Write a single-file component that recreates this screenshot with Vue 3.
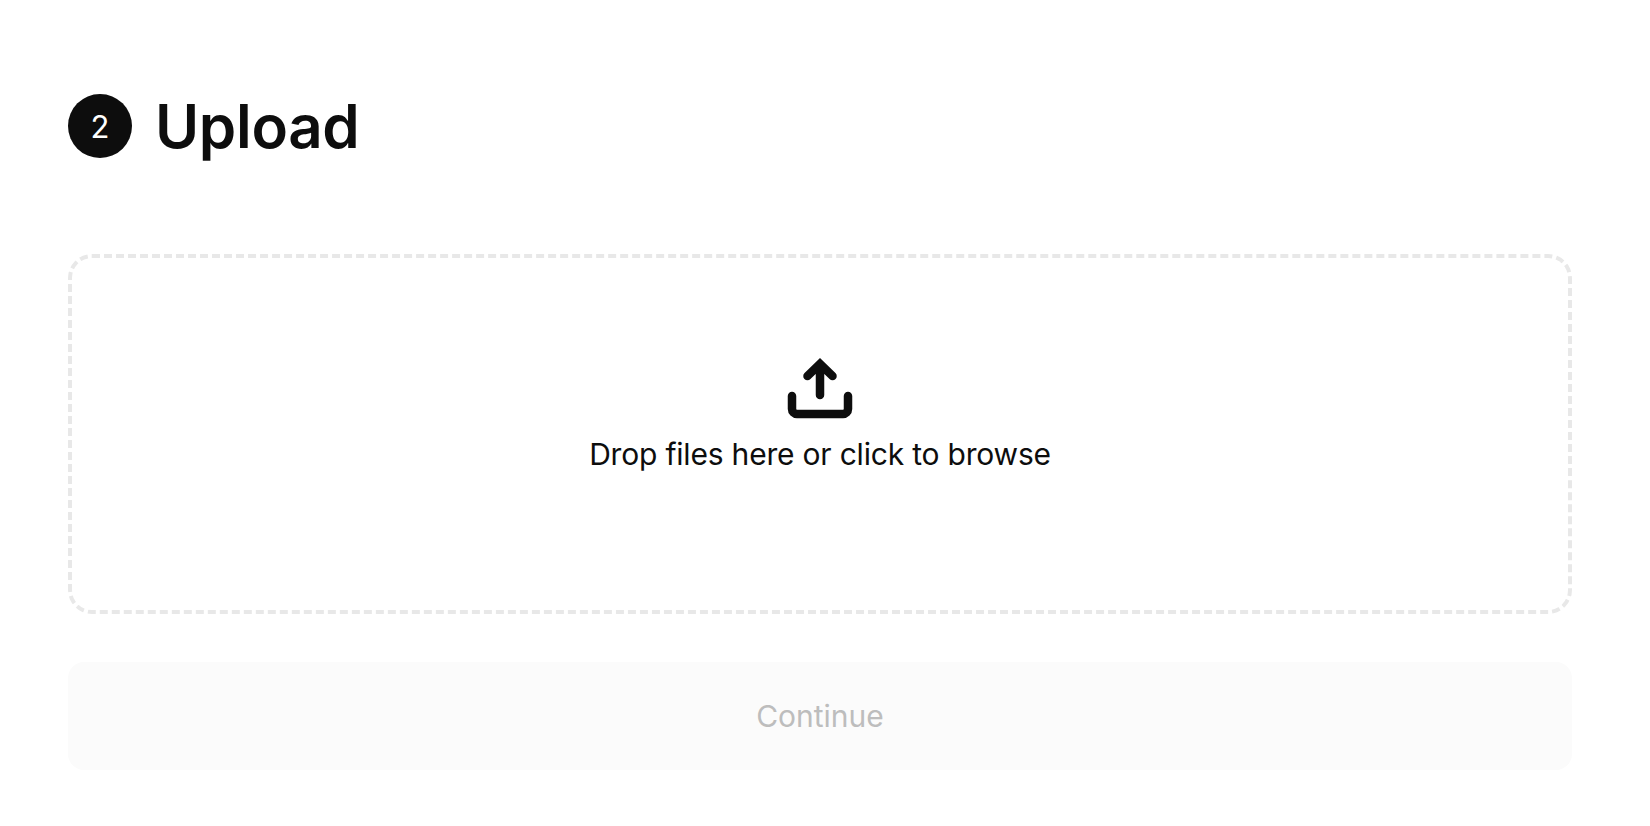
<template>
  <div class="upload-step">
    <header class="step-header">
      <span class="step-number">2</span>
      <h1>Upload</h1>
    </header>

    <div class="dropzone">
      <svg class="upload-icon" width="72" height="72" viewBox="0 0 72 72" fill="none">
        <path
          d="M8 43v13a5 5 0 0 0 5 5h46a5 5 0 0 0 5-5V43"
          stroke="#0d0d0d"
          stroke-width="8.5"
          stroke-linecap="round"
        />
        <path
          d="M23.5 23L36 11L48.5 23M36 11V42"
          stroke="#0d0d0d"
          stroke-width="8.5"
          stroke-linecap="round"
        />
      </svg>
      <p>Drop files here or click to browse</p>
    </div>

    <button class="continue-button" disabled>Continue</button>
  </div>
</template>

<script setup>
</script>

<style scoped>
.upload-step {
  padding: 94px 78px 56px 68px;
  font-family: Inter, "Liberation Sans", sans-serif;
  color: #0d0d0d;
}

.step-header {
  display: flex;
  align-items: center;
  gap: 23px;
  height: 64px;
  margin-bottom: 96px;
}

.step-number {
  display: flex;
  align-items: center;
  justify-content: center;
  width: 64px;
  height: 64px;
  border-radius: 50%;
  background-color: #0d0d0d;
  color: #fff;
  font-size: 31px;
}

h1 {
  margin: 0;
  font-size: 60px;
  font-weight: 600;
  letter-spacing: -0.3px;
  line-height: 64px;
}

.dropzone {
  box-sizing: border-box;
  display: flex;
  flex-direction: column;
  align-items: center;
  justify-content: center;
  gap: 9px;
  height: 360px;
  padding-bottom: 42px;
  border: 4px dashed #e8e8e8;
  border-radius: 24px;
}

.upload-icon {
  display: block;
}

.dropzone p {
  margin: 0;
  font-size: 30px;
  letter-spacing: -0.2px;
  line-height: 40px;
}

.continue-button {
  display: block;
  width: 100%;
  height: 108px;
  margin-top: 48px;
  border: none;
  border-radius: 16px;
  background-color: #fbfbfb;
  color: #bdbdbd;
  font-family: inherit;
  font-size: 30px;
}
</style>
